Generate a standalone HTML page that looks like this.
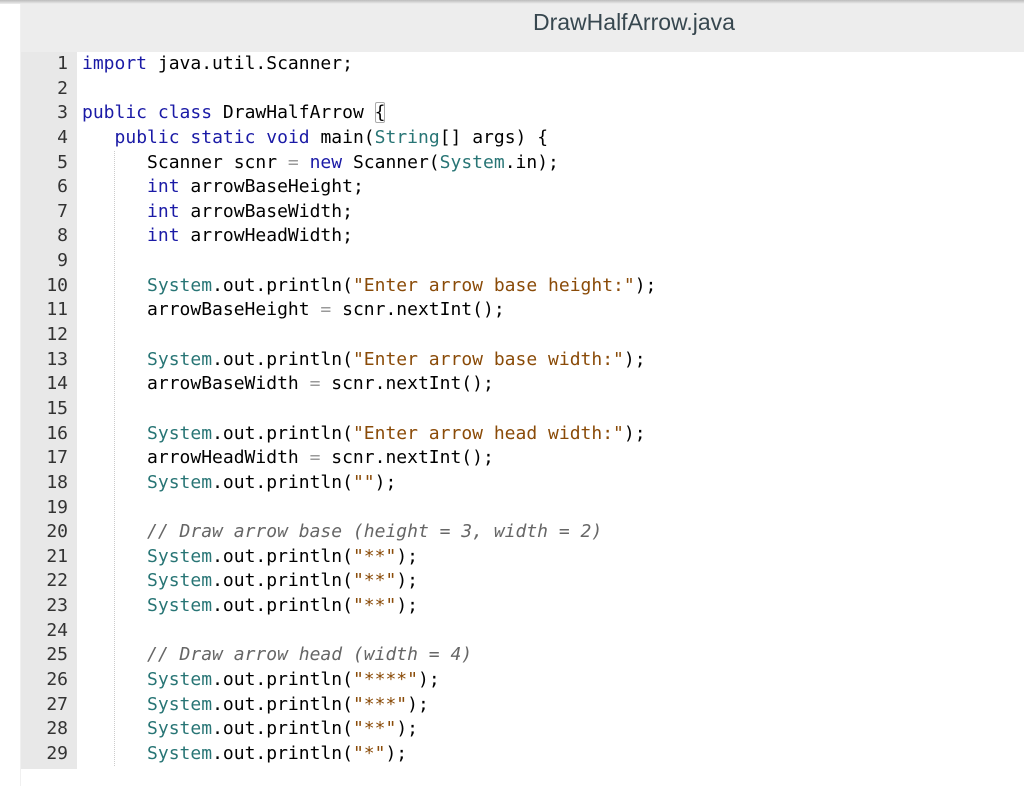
<!DOCTYPE html>
<html><head><meta charset="utf-8"><style>
html,body{margin:0;padding:0;background:#fff;width:1024px;height:786px;overflow:hidden;position:relative}
.top{position:absolute;left:0;top:0;width:1024px;height:4px;background:linear-gradient(#bbb,#eee)}
.left{position:absolute;left:0;top:0;width:20px;height:786px;background:#fff;border-right:1px solid #f0f0f0}
.hdr{position:absolute;left:21px;top:4px;right:0;height:48px;background:#ededed}
.title{position:absolute;left:533px;top:9px;font:23px "Liberation Sans",sans-serif;color:#37474f}
.gut{position:absolute;left:21px;top:52px;width:56px;height:717px;background:#e8e8e8}
.nums{position:absolute;left:21px;top:52px;width:47px;text-align:right;font:18px/24.64px "DejaVu Sans Mono",monospace;color:#333}
.code{position:absolute;left:82px;top:52px;font:18px/24.64px "DejaVu Sans Mono",monospace;color:#000;white-space:pre}
.guide{position:absolute;left:114px;top:151px;width:0;height:615px;border-left:1px dotted #ccc}
.k{color:#1a1aa6}.t{color:#287575}.s{color:#8a4b08}.c{color:#666;font-style:italic}.o{color:#999}
.b{outline:1px solid #aaa;outline-offset:-1px;border-radius:2px}
</style></head><body>
<div class="left"></div><div class="hdr"></div><div class="top"></div>
<div class="title">DrawHalfArrow.java</div>
<div class="gut"></div>
<div class="guide"></div>
<div class="nums">1<br>2<br>3<br>4<br>5<br>6<br>7<br>8<br>9<br>10<br>11<br>12<br>13<br>14<br>15<br>16<br>17<br>18<br>19<br>20<br>21<br>22<br>23<br>24<br>25<br>26<br>27<br>28<br>29</div>
<div class="code"><span class="k">import</span> java.util.Scanner;

<span class="k">public</span> <span class="k">class</span> DrawHalfArrow <span class="b">{</span>
   <span class="k">public</span> <span class="k">static</span> <span class="k">void</span> main(<span class="t">String</span>[] args) {
      Scanner scnr <span class="o">=</span> <span class="k">new</span> Scanner(<span class="t">System</span>.in);
      <span class="k">int</span> arrowBaseHeight;
      <span class="k">int</span> arrowBaseWidth;
      <span class="k">int</span> arrowHeadWidth;

      <span class="t">System</span>.out.println(<span class="s">"Enter arrow base height:"</span>);
      arrowBaseHeight <span class="o">=</span> scnr.nextInt();

      <span class="t">System</span>.out.println(<span class="s">"Enter arrow base width:"</span>);
      arrowBaseWidth <span class="o">=</span> scnr.nextInt();

      <span class="t">System</span>.out.println(<span class="s">"Enter arrow head width:"</span>);
      arrowHeadWidth <span class="o">=</span> scnr.nextInt();
      <span class="t">System</span>.out.println(<span class="s">""</span>);

      <span class="c">// Draw arrow base (height = 3, width = 2)</span>
      <span class="t">System</span>.out.println(<span class="s">"**"</span>);
      <span class="t">System</span>.out.println(<span class="s">"**"</span>);
      <span class="t">System</span>.out.println(<span class="s">"**"</span>);

      <span class="c">// Draw arrow head (width = 4)</span>
      <span class="t">System</span>.out.println(<span class="s">"****"</span>);
      <span class="t">System</span>.out.println(<span class="s">"***"</span>);
      <span class="t">System</span>.out.println(<span class="s">"**"</span>);
      <span class="t">System</span>.out.println(<span class="s">"*"</span>);</div>
</body></html>
